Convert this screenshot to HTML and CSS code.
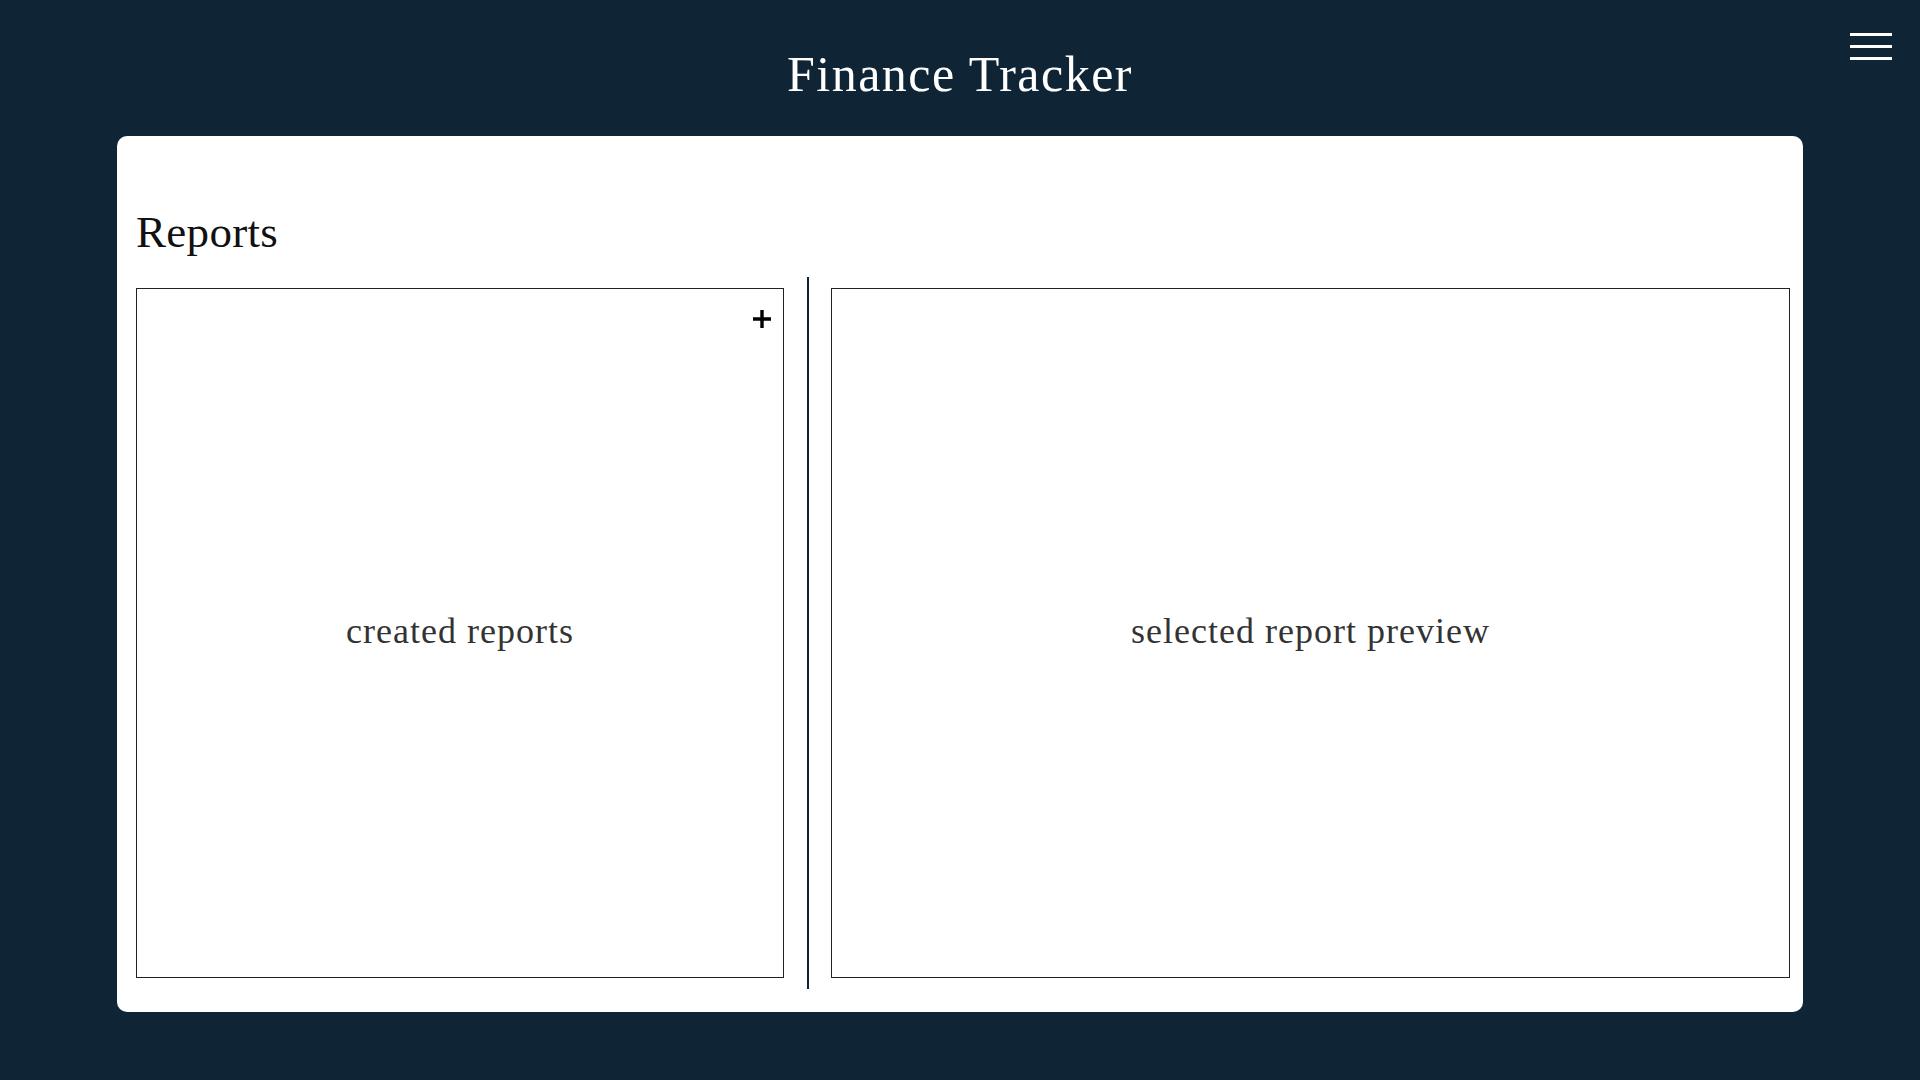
FILE: index.html
```html
<!DOCTYPE html>
<html lang="en">
<head>
<meta charset="utf-8">
<title>Finance Tracker</title>
<link rel="stylesheet" href="styles.css">
</head>
<body>
<header class="header">
  <h1 class="title">Finance Tracker</h1>
  <button class="menu" aria-label="Menu">
    <span class="menu-line"></span>
    <span class="menu-line"></span>
    <span class="menu-line"></span>
  </button>
</header>
<main class="panel">
  <h2 class="heading">Reports</h2>
  <div class="reports">
    <section class="box box-list">
      <button class="add" aria-label="Add report">
        <svg width="18" height="18" viewBox="0 0 18 18"><path d="M9 0v18M0 9h18" stroke="#000" stroke-width="3.4" fill="none"/></svg>
      </button>
      <span class="box-text">created reports</span>
    </section>
    <div class="divider"></div>
    <section class="box box-preview">
      <span class="box-text">selected report preview</span>
    </section>
  </div>
</main>
</body>
</html>
```
FILE: styles.css
```css
* { box-sizing: border-box; }
html, body { margin: 0; padding: 0; }
body {
  background: #0f2536;
  width: 1920px;
  height: 1080px;
  font-family: "Liberation Serif", "DejaVu Serif", serif;
  color: #333;
  overflow: hidden;
}
.header {
  position: relative;
  padding-top: 45px;
  height: 136px;
}
.title {
  margin: 0;
  text-align: center;
  color: #fff;
  font-weight: normal;
  font-size: 50px;
  line-height: 58px;
  letter-spacing: 1.5px;
}
.menu {
  position: absolute;
  top: 33px;
  right: 28px;
  width: 42px;
  padding: 0;
  border: 0;
  background: none;
  display: flex;
  flex-direction: column;
  gap: 9px;
}
.menu-line {
  display: block;
  height: 3px;
  background: #fff;
}
.panel {
  margin: 0 117px;
  height: 876px;
  background: #fff;
  border-radius: 10px;
  padding: 70px 13px 0 19px;
}
.heading {
  margin: 0 0 19px;
  font-weight: normal;
  font-size: 45px;
  line-height: 52px;
  color: #111;
  letter-spacing: 0.3px;
}
.reports {
  display: flex;
  height: 712px;
}
.box {
  position: relative;
  margin: 11px 0;
  border: 1px solid #222;
  display: flex;
  align-items: center;
  justify-content: center;
}
.box-list { width: 648px; }
.box-preview { flex: 1; }
.divider {
  width: 2px;
  background: #0f2536;
  margin: 0 22px 0 23px;
}
.box-text {
  font-size: 36px;
  letter-spacing: 1px;
  color: #333;
  margin-top: -4px;
}
.add {
  position: absolute;
  top: 21px;
  right: 12px;
  width: 18px;
  height: 18px;
  padding: 0;
  border: 0;
  background: none;
  display: flex;
}
```
